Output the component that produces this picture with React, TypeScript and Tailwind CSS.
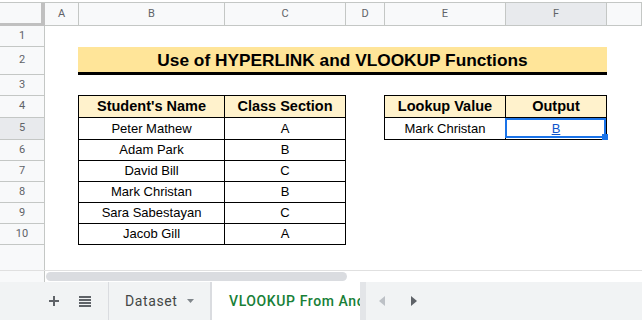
import React from 'react';

const students: [string, string][] = [
  ['Peter Mathew', 'A'],
  ['Adam Park', 'B'],
  ['David Bill', 'C'],
  ['Mark Christan', 'B'],
  ['Sara Sabestayan', 'C'],
  ['Jacob Gill', 'A'],
];

const rowHeights = ['h-[22px]', 'h-[21px]', 'h-[21px]', 'h-[21px]', 'h-[21px]', 'h-[21px]'];

const cellText = "font-['Liberation_Sans',Arial,sans-serif] text-black";

function RowHead({ n, active, last }: { n?: number; active?: boolean; last?: boolean }) {
  return (
    <div
      className={`w-[45px] shrink-0 flex items-center justify-center border-r border-[#c4c7c5] font-['Roboto',sans-serif] text-[11px] text-[#5f6368] ${
        last ? '' : 'border-b'
      } ${active ? 'bg-[#e8eaed]' : 'bg-[#f8f9fa]'}`}
    >
      {n}
    </div>
  );
}

function ColHead({ label, className }: { label?: string; className: string }) {
  return (
    <div
      className={`shrink-0 flex items-center justify-center border-r border-b border-[#c4c7c5] font-['Roboto',sans-serif] text-[11px] text-[#5f6368] ${className}`}
    >
      {label}
    </div>
  );
}

export default function App() {
  return (
    <div className="w-[642px] h-[320px] overflow-hidden bg-white pt-[2px]">
      {/* column headers */}
      <div className="flex h-[24px] border-t border-[#c4c7c5]">
        <div className="w-[45px] shrink-0 bg-[#f8f9fa] border-r-4 border-b-[3px] border-[#c0c0c0]" />
        <ColHead label="A" className="w-[34px] bg-[#f8f9fa]" />
        <ColHead label="B" className="w-[146px] bg-[#f8f9fa]" />
        <ColHead label="C" className="w-[121px] bg-[#f8f9fa]" />
        <ColHead label="D" className="w-[39px] bg-[#f8f9fa]" />
        <ColHead label="E" className="w-[121px] bg-[#f8f9fa]" />
        <ColHead label="F" className="w-[101px] bg-[#e8eaed]" />
        <ColHead className="flex-1 bg-[#f8f9fa]" />
      </div>

      {/* row 1 */}
      <div className="flex h-[21px]">
        <RowHead n={1} />
      </div>

      {/* row 2: title */}
      <div className="flex h-[28px]">
        <RowHead n={2} />
        <div className="w-[33px] shrink-0" />
        <div
          className={`w-[529px] shrink-0 flex items-center justify-center pt-[2px] bg-[#ffe599] border-b-[3px] border-black font-bold text-[17.3px] ${cellText}`}
        >
          Use of HYPERLINK and VLOOKUP Functions
        </div>
      </div>

      {/* row 3 */}
      <div className="flex h-[21px]">
        <RowHead n={3} />
        <div className="w-[33px] shrink-0" />
        <div className="w-[268px] shrink-0 border-b border-black" />
        <div className="w-[38px] shrink-0" />
        <div className="w-[223px] shrink-0 border-b border-black" />
      </div>

      {/* row 4: table headers */}
      <div className="flex h-[22px]">
        <RowHead n={4} />
        <div className="w-[34px] shrink-0 border-r border-black" />
        <div className={`w-[146px] shrink-0 flex items-center justify-center bg-[#fff2cc] border-r border-b border-black font-bold text-[14.5px] ${cellText}`}>
          Student's Name
        </div>
        <div className={`w-[121px] shrink-0 flex items-center justify-center bg-[#fff2cc] border-r border-b border-black font-bold text-[14.5px] ${cellText}`}>
          Class Section
        </div>
        <div className="w-[39px] shrink-0 border-r border-black" />
        <div className={`w-[121px] shrink-0 flex items-center justify-center bg-[#fff2cc] border-r border-b border-black font-bold text-[14.5px] ${cellText}`}>
          Lookup Value
        </div>
        <div className={`w-[101px] shrink-0 flex items-center justify-center bg-[#fff2cc] border-r border-b border-black font-bold text-[14.5px] ${cellText}`}>
          Output
        </div>
      </div>

      {/* rows 5-10 */}
      {students.map(([name, section], i) => (
        <div key={name} className={`flex ${rowHeights[i]}`}>
          <RowHead n={i + 5} active={i === 0} />
          <div className="w-[34px] shrink-0 border-r border-black" />
          <div className={`w-[146px] shrink-0 flex items-center justify-center border-r border-b border-black text-[13px] ${cellText}`}>
            {name}
          </div>
          <div className={`w-[121px] shrink-0 flex items-center justify-center border-r border-b border-black text-[13px] ${cellText}`}>
            {section}
          </div>
          {i === 0 && (
            <>
              <div className="w-[39px] shrink-0 border-r border-black" />
              <div className={`w-[121px] shrink-0 flex items-center justify-center border-r border-b border-black text-[13px] ${cellText}`}>
                Mark Christan
              </div>
              <div className={`relative w-[101px] shrink-0 flex items-center justify-center border-r border-b border-black text-[13px] ${cellText}`}>
                <span className="text-[#1155cc] underline">B</span>
                <div className="absolute -left-px top-0 right-0 bottom-px border-2 border-[#1a73e8]" />
                <div className="absolute -right-[2px] -bottom-px w-[6px] h-[6px] bg-[#1a73e8]" />
              </div>
            </>
          )}
        </div>
      ))}

      {/* row 11 */}
      <div className="flex h-[25px]">
        <RowHead last />
      </div>

      {/* horizontal scrollbar */}
      <div className="flex h-[12px] border-t border-[#e0e0e0]">
        <div className="w-[45px] shrink-0 bg-[#f8f9fa] border-r border-[#c4c7c5]" />
        <div className="ml-px mt-px h-[9px] w-[301px] rounded-full bg-[#dadce0]" />
      </div>

      {/* sheet tabs */}
      <div className="flex h-[38px] bg-[#f1f3f4] font-['Roboto',sans-serif] text-[14px] tracking-[0.6px]">
        <div className="w-[108px] shrink-0 flex items-center pl-[49px]">
          <svg width="10" height="10" viewBox="0 0 10 10">
            <path d="M4 0h2v10H4zM0 4h10v2H0z" fill="#5f6368" />
          </svg>
          <svg className="ml-[20px]" width="12" height="11" viewBox="0 0 12 11">
            <path d="M0 0h12v2H0zM0 3h12v2H0zM0 6h12v2H0zM0 9h12v2H0z" fill="#5f6368" />
          </svg>
        </div>
        <div className="w-[102px] shrink-0 flex items-center border-l border-[#dadce0] pl-[16px] text-[#444746]">
          <span>Dataset</span>
          <svg className="ml-[10px]" width="7" height="4" viewBox="0 0 7 4">
            <path d="M0 0h7L3.5 4z" fill="#80868b" />
          </svg>
        </div>
        <div className="w-[2px] shrink-0 bg-[#dadce0]" />
        <div className="w-[148px] shrink-0 flex items-center bg-white pl-[17px] overflow-hidden whitespace-nowrap font-medium text-[#188038]">
          VLOOKUP From Another Sheet
        </div>
        <div className="w-[6px] shrink-0 bg-[#e3e5e8]" />
        <div className="flex items-center">
          <svg className="ml-[13px]" width="6" height="10" viewBox="0 0 6 10">
            <path d="M6 0v10L0 5z" fill="#bdc1c6" />
          </svg>
          <svg className="ml-[26px]" width="6" height="10" viewBox="0 0 6 10">
            <path d="M0 0v10l6-5z" fill="#5f6368" />
          </svg>
        </div>
      </div>
    </div>
  );
}
